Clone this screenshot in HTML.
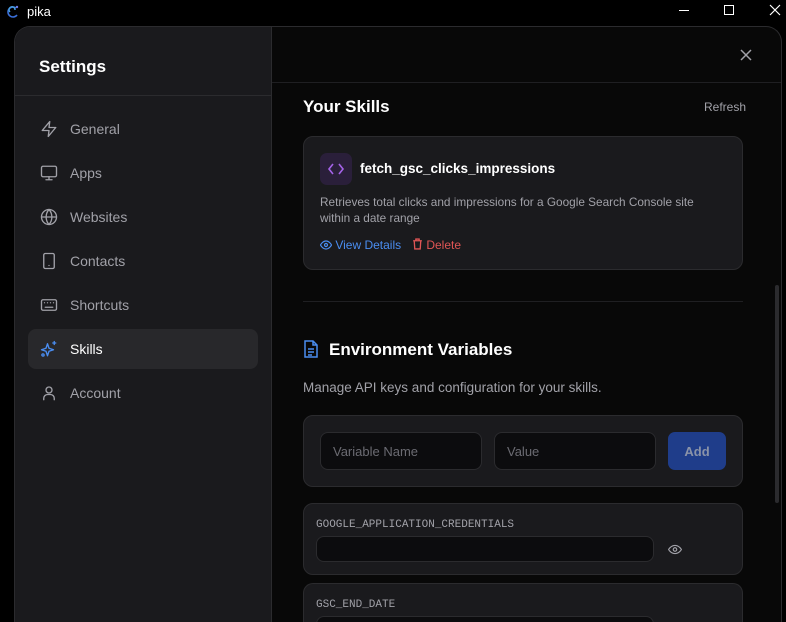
<!DOCTYPE html>
<html style="width:786px;height:622px;overflow:hidden"><head><style>
*{box-sizing:border-box;margin:0;padding:0}
body{width:786px;height:622px;background:#000;overflow:hidden;font-family:"Liberation Sans",sans-serif;position:relative;color:#e5e5e5}
.top{position:absolute;left:0;top:0;width:786px;height:26px;background:#000}
.modal{position:absolute;left:14px;top:26px;width:768px;height:596px;border:1px solid #2b2b2e;border-bottom:none;border-radius:16px 16px 0 0;overflow:hidden;background:#080808}
.side{position:absolute;left:0;top:0;width:257px;height:100%;background:#1a1a1d;border-right:1px solid #2b2b2e}
.side h1{position:absolute;left:24px;top:30px;font-size:17px;font-weight:bold;color:#fff}
.side .dv{position:absolute;left:0;top:68px;width:100%;height:1px;background:#2b2b2e}
.item{position:absolute;left:13px;width:230px;height:40px;border-radius:8px;display:flex;align-items:center;padding-left:12px;font-size:14px;color:#a1a1a8}
.item svg{width:18px;height:18px;margin-right:12px;fill:none;stroke:#a1a1a8;stroke-width:1.8;stroke-linecap:round;stroke-linejoin:round}
.item.on{background:#28282b;color:#fff}
.item.on svg{stroke:#4a8df0}
.main{position:absolute;left:257px;top:0;right:0;height:100%;overflow:hidden}
.hl{position:absolute;left:0;right:0;top:55px;height:1px;background:#1f1f22}
.card{position:absolute;left:31px;width:440px;background:#1a1a1d;border:1px solid #2b2b2e;border-radius:10px}
.inp{position:absolute;background:#0c0c0e;border:1px solid #2b2b2e;border-radius:8px;font-size:13px;color:#6b6b72;padding-left:12px;display:flex;align-items:center}
.mono{font-family:"Liberation Mono",monospace;font-size:11px;color:#a1a1a8;position:absolute;left:12px}
</style></head><body>
<div class="top">
<svg style="position:absolute;left:6px;top:4px" width="14" height="16" viewBox="0 0 14 16"><path d="M10 4 A5 5 0 1 0 11 11" stroke="#3a6fd8" stroke-width="1.6" fill="none"/><path d="M4 8 A3 3 0 1 1 9 6" stroke="#4aa0e0" stroke-width="1.4" fill="none"/><circle cx="11" cy="3" r="1.2" fill="#6a7ce8"/></svg>
<span style="position:absolute;left:27px;top:4px;font-size:13px;color:#fff">pika</span>
<div style="position:absolute;left:679px;top:10px;width:10px;height:1px;background:#fff"></div>
<div style="position:absolute;left:724px;top:5px;width:10px;height:10px;border:1px solid #fff"></div>
<svg style="position:absolute;left:769px;top:4px" width="12" height="12" viewBox="0 0 12 12"><path d="M1 1L11 11M11 1L1 11" stroke="#fff" stroke-width="1.2"/></svg>
</div>
<div class="modal">
<div class="side">
<h1>Settings</h1><div class="dv"></div>
<div class="item" style="top:82px"><svg viewBox="0 0 24 24"><path d="M13 2L3 14h9l-1 8 10-12h-9z"/></svg>General</div>
<div class="item" style="top:126px"><svg viewBox="0 0 24 24"><rect x="2" y="3" width="20" height="14" rx="2"/><path d="M8 21h8M12 17v4"/></svg>Apps</div>
<div class="item" style="top:170px"><svg viewBox="0 0 24 24"><circle cx="12" cy="12" r="10"/><path d="M2 12h20M12 2a15 15 0 0 1 0 20a15 15 0 0 1 0-20"/></svg>Websites</div>
<div class="item" style="top:214px"><svg viewBox="0 0 24 24"><rect x="5" y="2" width="14" height="20" rx="2"/><path d="M12 18h.01"/></svg>Contacts</div>
<div class="item" style="top:258px"><svg viewBox="0 0 24 24"><rect x="2" y="5" width="20" height="14" rx="2"/><path d="M6 9h.01M10 9h.01M14 9h.01M18 9h.01M7 15h10"/></svg>Shortcuts</div>
<div class="item on" style="top:302px"><svg viewBox="0 0 24 24"><path d="M10 5l2 6 6 2-6 2-2 6-2-6-6-2 6-2z"/><path d="M19 2v4M17 4h4"/><circle cx="4" cy="20" r="1.5"/></svg>Skills</div>
<div class="item" style="top:346px"><svg viewBox="0 0 24 24"><circle cx="12" cy="8" r="4"/><path d="M5 21v-2a5 5 0 0 1 5-5h4a5 5 0 0 1 5 5v2"/></svg>Account</div>
</div>
<div class="main">
<svg style="position:absolute;left:468px;top:22px" width="12" height="12" viewBox="0 0 12 12"><path d="M1 1L11 11M11 1L1 11" stroke="#a1a1a8" stroke-width="1.5"/></svg>
<div class="hl"></div>
<div style="position:absolute;left:31px;top:70px;font-size:17px;font-weight:bold;color:#fff">Your Skills</div>
<div style="position:absolute;left:432px;top:73px;font-size:12px;color:#a1a1a8">Refresh</div>
<div class="card" style="top:109px;height:134px">
<div style="position:absolute;left:16px;top:16px;width:32px;height:32px;border-radius:7px;background:#2a1f3a"><svg width="32" height="32" viewBox="0 0 32 32"><path d="M13 11l-4 5 4 5M19 11l4 5-4 5" stroke="#a463e8" stroke-width="1.6" fill="none"/></svg></div>
<div style="position:absolute;left:56px;top:24px;font-size:13.5px;font-weight:bold;color:#fff">fetch_gsc_clicks_impressions</div>
<div style="position:absolute;left:16px;top:57px;width:385px;font-size:11.8px;line-height:16px;color:#a1a1a8">Retrieves total clicks and impressions for a Google Search Console site within a date range</div>
<div style="position:absolute;left:16px;top:101px;font-size:12px;color:#4a8df0"><svg width="12" height="10" viewBox="0 0 24 20" style="vertical-align:-1px"><path d="M1 10s4-8 11-8 11 8 11 8-4 8-11 8S1 10 1 10z" stroke="#4a8df0" stroke-width="2.4" fill="none"/><circle cx="12" cy="10" r="3" stroke="#4a8df0" stroke-width="2.4" fill="none"/></svg> View Details</div>
<div style="position:absolute;left:108px;top:101px;font-size:12px;color:#e05555"><svg width="11" height="12" viewBox="0 0 20 22" style="vertical-align:-1px"><path d="M2 5h16M7 5V2h6v3M4 5l1 15h10l1-15" stroke="#e05555" stroke-width="2.4" fill="none"/></svg> Delete</div>
</div>
<div style="position:absolute;left:31px;top:274px;width:440px;height:1px;background:#1f1f22"></div>
<svg style="position:absolute;left:31px;top:313px" width="16" height="18" viewBox="0 0 16 18"><path d="M2 1h8l4 4v12H2z M10 1v4h4 M5 9h6M5 12h6M5 15h4" stroke="#4a8df0" stroke-width="1.5" fill="none"/></svg>
<div style="position:absolute;left:57px;top:313px;font-size:17px;font-weight:bold;color:#fff">Environment Variables</div>
<div style="position:absolute;left:31px;top:353px;font-size:13.5px;color:#a1a1a8">Manage API keys and configuration for your skills.</div>
<div class="card" style="top:388px;height:72px">
<div class="inp" style="left:16px;top:16px;width:162px;height:38px">Variable Name</div>
<div class="inp" style="left:190px;top:16px;width:162px;height:38px">Value</div>
<div style="position:absolute;left:364px;top:16px;width:58px;height:38px;border-radius:7px;background:#1f3d8a;color:#8a93a8;font-weight:bold;font-size:13px;display:flex;align-items:center;justify-content:center">Add</div>
</div>
<div class="card" style="top:476px;height:72px">
<div class="mono" style="top:15px">GOOGLE_APPLICATION_CREDENTIALS</div>
<div class="inp" style="left:12px;top:32px;width:338px;height:26px"></div>
<svg style="position:absolute;left:364px;top:40px" width="14" height="11" viewBox="0 0 24 18"><path d="M1 9s4-7 11-7 11 7 11 7-4 7-11 7S1 9 1 9z" stroke="#a1a1a8" stroke-width="2" fill="none"/><circle cx="12" cy="9" r="3" stroke="#a1a1a8" stroke-width="2" fill="none"/></svg>
</div>
<div class="card" style="top:556px;height:40px;border-bottom:none;border-radius:10px 10px 0 0">
<div class="mono" style="top:15px">GSC_END_DATE</div>
<div class="inp" style="left:12px;top:32px;width:338px;height:8px;border-bottom:none;border-radius:8px 8px 0 0"></div>
</div>
<div style="position:absolute;left:503px;top:258px;width:4px;height:218px;border-radius:2px;background:#2b2b2e"></div>
</div>
</div>
</body></html>
